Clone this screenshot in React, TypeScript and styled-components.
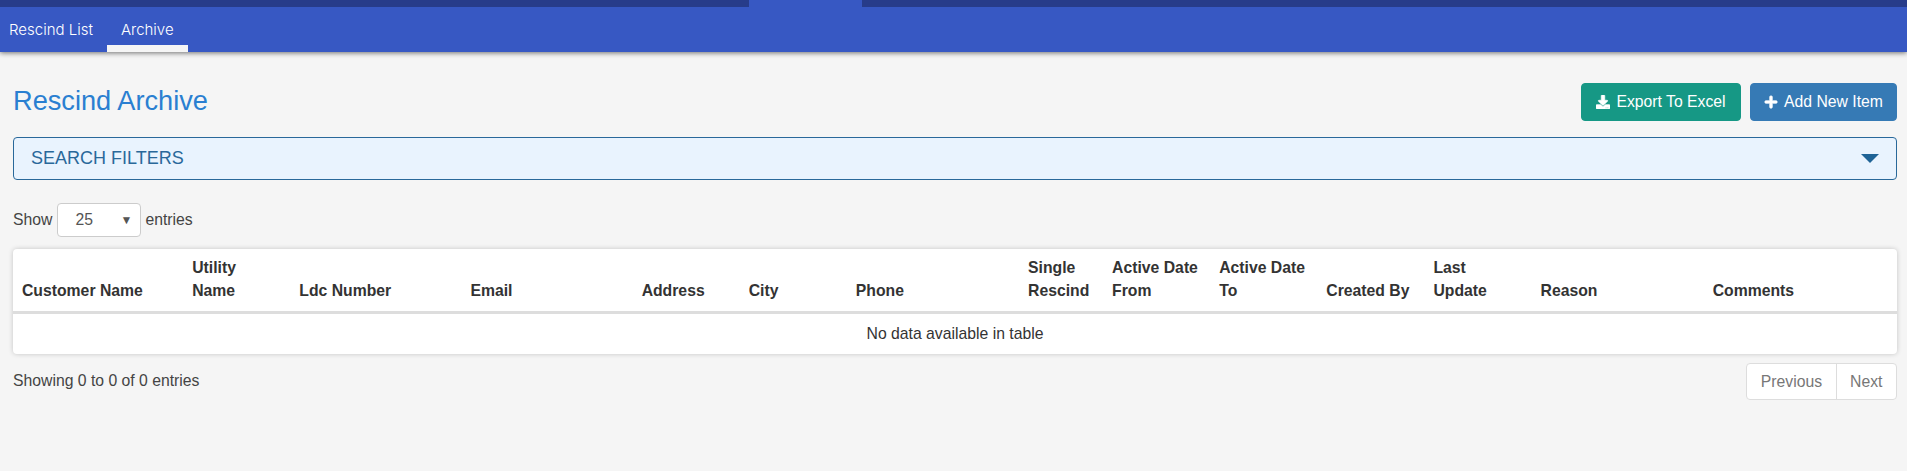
import { createGlobalStyle, styled } from 'styled-components'
import { FaDownload, FaPlus } from 'react-icons/fa'

const GlobalStyle = createGlobalStyle`
  html, body {
    margin: 0;
    padding: 0;
    background: #f5f5f5;
    font-family: "Liberation Sans", Arial, sans-serif;
    font-size: 15.75px;
    color: #333;
  }
`

const Header = styled.header`
  height: 52px;
  background: #3758c3;
  box-shadow: 0 1px 5px rgba(0, 0, 0, .55);
  display: flex;
  flex-direction: column;
`

const TopStrip = styled.div`
  display: grid;
  grid-template-columns: 749px 113px 1fr;
  height: 7px;
  background: #273c8a;
`

const StripGap = styled.div`
  grid-column: 2;
  background: #3758c3;
`

const Tabs = styled.nav`
  display: flex;
  flex: 1;
  padding-left: 9px;
`

const Tab = styled.a<{ $active?: boolean }>`
  font-family: Inter, "Open Sans", sans-serif;
  font-size: 15px;
  font-weight: 300;
  line-height: 18px;
  color: #fff;
  padding: 14px 14px 0;
  box-sizing: border-box;
  border-bottom: 7px solid ${p => (p.$active ? '#f5f5f5' : 'transparent')};
  &:first-child {
    padding: 14px 14px 0 0;
  }
`

const Content = styled.main`
  padding: 31px 10px 0 13px;
`

const TitleRow = styled.div`
  display: flex;
  align-items: center;
  justify-content: space-between;
  height: 38px;
`

const Title = styled.h1`
  margin: -2px 0 0;
  font-size: 27.2px;
  font-weight: 400;
  color: #2a7fd1;
`

const Actions = styled.div`
  display: flex;
  gap: 9px;
`

const Button = styled.button<{ $color: string; $width: number }>`
  display: flex;
  align-items: center;
  justify-content: center;
  gap: 6px;
  width: ${p => p.$width}px;
  height: 38px;
  padding: 0;
  border: 1px solid ${p => p.$color};
  border-radius: 4px;
  background: ${p => p.$color};
  color: #fff;
  font-family: inherit;
  font-size: 15.75px;
  svg {
    font-size: 14px;
    stroke: currentColor;
    stroke-width: 24;
  }
`

const FilterBar = styled.div`
  display: flex;
  align-items: center;
  justify-content: space-between;
  height: 43px;
  box-sizing: border-box;
  margin-top: 16px;
  padding: 0 17px;
  background: #e9f3fe;
  border: 1px solid #29689a;
  border-radius: 4px;
  color: #29689a;
  font-size: 18px;
`

const Caret = styled.span`
  width: 0;
  height: 0;
  border-left: 9px solid transparent;
  border-right: 9px solid transparent;
  border-top: 9px solid #1f6396;
`

const LengthRow = styled.div`
  display: flex;
  align-items: center;
  gap: 4px;
  margin-top: 23px;
  height: 34px;
  color: #444;
`

const FakeSelect = styled.div`
  display: flex;
  align-items: center;
  justify-content: space-between;
  width: 84px;
  height: 34px;
  margin-left: 1px;
  box-sizing: border-box;
  padding: 0 8px 0 17px;
  background: #fff;
  border: 1px solid #ccc;
  border-radius: 4px;
  color: #555;
  span {
    font-size: 12px;
  }
`

const TableCard = styled.div`
  margin-top: 12px;
  background: #fff;
  border-radius: 4px;
  box-shadow: 0 0 5px rgba(0, 0, 0, .2);
  overflow: hidden;
`

const Table = styled.table`
  width: 100%;
  border-collapse: collapse;
  table-layout: fixed;
`

const Th = styled.th`
  padding: 8px 11px 9px 8px;
  border-bottom: 3px solid #ddd;
  text-align: left;
  vertical-align: bottom;
  font-size: 15.75px;
  line-height: 22.5px;
  color: #333;
  &:first-child {
    padding-left: 9px;
  }
`

const Empty = styled.td`
  height: 40px;
  padding: 0;
  text-align: center;
  color: #333;
`

const FooterRow = styled.div`
  display: flex;
  justify-content: space-between;
  margin-top: 9px;
`

const Info = styled.div`
  padding-top: 9px;
  color: #444;
`

const Pager = styled.div`
  display: flex;
  height: 37px;
  box-sizing: border-box;
  background: #fff;
  border: 1px solid #ddd;
  border-radius: 4px;
`

const PageLink = styled.a`
  display: flex;
  align-items: center;
  padding: 0 13.5px;
  color: #777;
  & + & {
    border-left: 1px solid #ddd;
  }
`

const columns: [string, number][] = [
  ['Customer Name', 171],
  ['Utility Name', 107],
  ['Ldc Number', 171],
  ['Email', 171],
  ['Address', 107],
  ['City', 107],
  ['Phone', 172],
  ['Single Rescind', 84],
  ['Active Date From', 107],
  ['Active Date To', 107],
  ['Created By', 107],
  ['Last Update', 107],
  ['Reason', 172],
  ['Comments', 192],
]

export default function App() {
  return (
    <>
      <GlobalStyle />
      <Header>
        <TopStrip>
          <StripGap />
        </TopStrip>
        <Tabs>
          <Tab>Rescind List</Tab>
          <Tab $active>Archive</Tab>
        </Tabs>
      </Header>
      <Content>
        <TitleRow>
          <Title>Rescind Archive</Title>
          <Actions>
            <Button $color="#169885" $width={160}><FaDownload /> Export To Excel</Button>
            <Button $color="#367ab5" $width={147}><FaPlus /> Add New Item</Button>
          </Actions>
        </TitleRow>
        <FilterBar>
          SEARCH FILTERS
          <Caret />
        </FilterBar>
        <LengthRow>
          Show
          <FakeSelect>25<span>▼</span></FakeSelect>
          entries
        </LengthRow>
        <TableCard>
          <Table>
            <colgroup>
              {columns.map(([name, width]) => <col key={name} width={width} />)}
            </colgroup>
            <thead>
              <tr>
                {columns.map(([name]) => <Th key={name}>{name}</Th>)}
              </tr>
            </thead>
            <tbody>
              <tr>
                <Empty colSpan={columns.length}>No data available in table</Empty>
              </tr>
            </tbody>
          </Table>
        </TableCard>
        <FooterRow>
          <Info>Showing 0 to 0 of 0 entries</Info>
          <Pager>
            <PageLink>Previous</PageLink>
            <PageLink>Next</PageLink>
          </Pager>
        </FooterRow>
      </Content>
    </>
  )
}
